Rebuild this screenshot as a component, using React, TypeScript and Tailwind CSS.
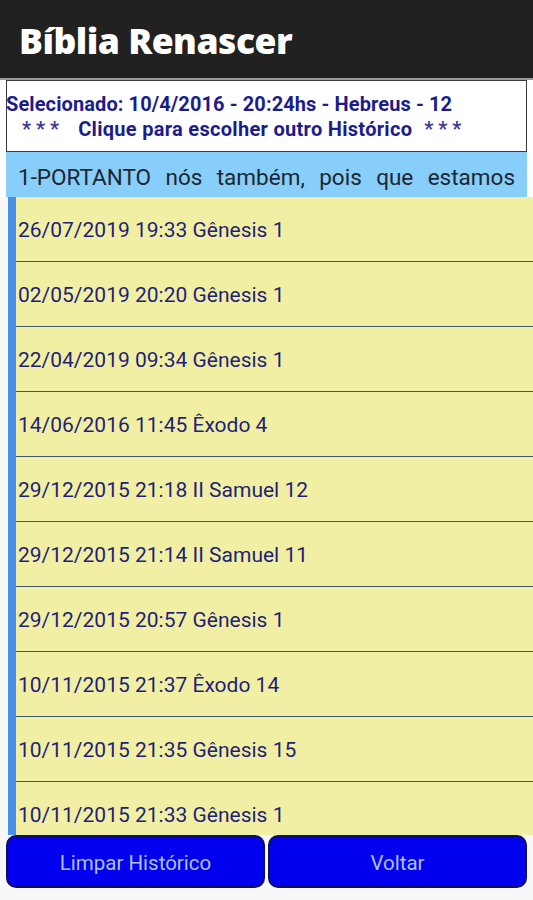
const HISTORY = [
  "26/07/2019 19:33 Gênesis 1",
  "02/05/2019 20:20 Gênesis 1",
  "22/04/2019 09:34 Gênesis 1",
  "14/06/2016 11:45 Êxodo 4",
  "29/12/2015 21:18 II Samuel 12",
  "29/12/2015 21:14 II Samuel 11",
  "29/12/2015 20:57 Gênesis 1",
  "10/11/2015 21:37 Êxodo 14",
  "10/11/2015 21:35 Gênesis 15",
  "10/11/2015 21:33 Gênesis 1",
];

export default function App() {
  return (
    <div
      className="w-[533px] h-[900px] flex flex-col bg-[#f8f8f8] overflow-hidden"
      style={{ fontFamily: "Roboto, 'Liberation Sans', sans-serif" }}
    >
      {/* Header */}
      <div className="h-[80px] shrink-0 bg-[#212121] flex items-center pl-[19px] border-b-2 border-[#9a9a9a]">
        <h1
          className="text-[35.5px] font-extrabold text-white tracking-[-0.5px] pt-[3px]"
          style={{ fontFamily: "'Open Sans', sans-serif" }}
        >
          Bíblia Renascer
        </h1>
      </div>

      {/* Selected box */}
      <div className="bg-white pl-[6px] pr-[6px] shrink-0">
        <div className="h-[72px] border border-[#3a3a3a] bg-white flex flex-col justify-center text-[20px] font-bold text-[#1c1c8c] leading-[25px] pt-[2px]">
          <div className="-ml-[1px] whitespace-nowrap tracking-[0.1px]">Selecionado: 10/4/2016 - 20:24hs - Hebreus - 12</div>
          <div className="pl-[15px] flex items-center whitespace-nowrap">
            <span className="text-[#3a3a9a]">* * *</span>
            <span className="ml-[19px] tracking-[0.3px]">Clique para escolher outro Histórico</span>
            <span className="ml-[12px] text-[#3a3a9a]">* * *</span>
          </div>
        </div>
      </div>

      {/* Verse band */}
      <div className="bg-white pl-[6px] pr-[6px] shrink-0">
        <div className="h-[45px] bg-[#87cefa] flex items-center px-[12px] pt-[6px]">
          <p className="w-full text-[22.5px] text-[#1d2630] leading-none text-justify [text-align-last:justify]">
            1-PORTANTO nós também, pois que estamos
          </p>
        </div>
      </div>

      {/* History list */}
      <div className="flex-1 min-h-0 overflow-hidden ml-[8px] border-l-[8px] border-[#4a8fe8] bg-[#f1efa4]">
        {HISTORY.map((item) => (
          <div
            key={item}
            className="h-[65px] border-b border-[#3f5c6e] flex items-center pl-[2px] pt-[3px] text-[21px] text-[#1f1f78]"
          >
            {item}
          </div>
        ))}
      </div>

      {/* Buttons */}
      <div className="shrink-0 flex gap-[3px] px-[6px] pb-[12px]">
        <button className="flex-1 h-[53px] rounded-[10px] bg-[#0000ee] border-2 border-[#10105a] text-[20.5px] text-[#adc0f8] pt-[3px]">
          Limpar Histórico
        </button>
        <button className="flex-1 h-[53px] rounded-[10px] bg-[#0000ee] border-2 border-[#10105a] text-[20.5px] text-[#adc0f8] pt-[3px]">
          Voltar
        </button>
      </div>
    </div>
  );
}
